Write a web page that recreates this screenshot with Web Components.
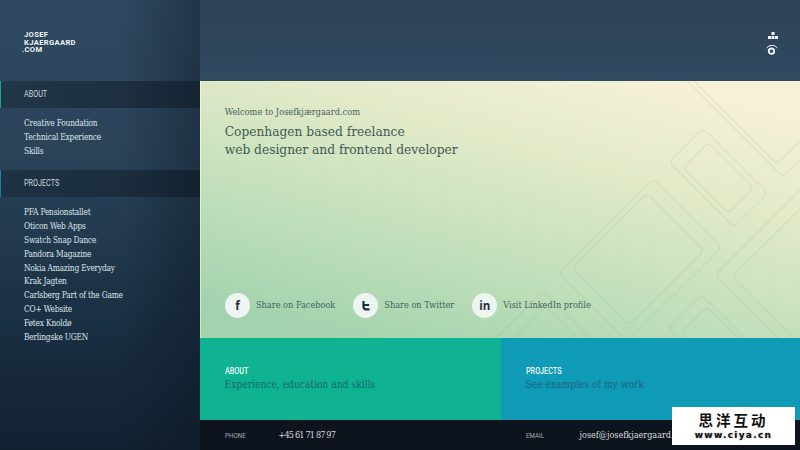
<!DOCTYPE html>
<html>
<head>
<meta charset="utf-8">
<style>
  html, body { margin: 0; height: 100%; overflow: hidden; background: #0e141e; }
  body { font-family: "DejaVu Serif", "Liberation Serif", serif; font-stretch: condensed; }
</style>
</head>
<body>
<site-page>
  <site-sidebar slot="side">
    <nav-group title="ABOUT" accent="#1aa58f" style="--top:9px;--bottom:11.6px">
      <a>Creative Foundation</a><a>Technical Experience</a><a>Skills</a>
    </nav-group>
    <nav-group title="PROJECTS" accent="#17839c" style="--top:9.5px;--bottom:11px">
      <a>PFA Pensionstallet</a><a>Oticon Web Apps</a><a>Swatch Snap Dance</a><a>Pandora Magazine</a>
      <a>Nokia Amazing Everyday</a><a>Krak Jagten</a><a>Carlsberg Part of the Game</a><a>CO+ Website</a>
      <a>Føtex Knoldø</a><a>Berlingske UGEN</a>
    </nav-group>
  </site-sidebar>
  <top-bar slot="main"></top-bar>
  <hero-panel slot="main">
    <share-link icon="f" label="Share on Facebook"></share-link>
    <share-link icon="t" label="Share on Twitter"></share-link>
    <share-link icon="in" label="Visit LinkedIn profile"></share-link>
  </hero-panel>
  <div slot="main" style="display:flex">
    <promo-card heading="ABOUT" text="Experience, education and skills" style="width:301px;--bg:#10b391;--fg:#12696f"></promo-card>
    <promo-card heading="PROJECTS" text="See examples of my work" style="flex:1;--bg:#0f9ab5;--fg:#1e6482"></promo-card>
  </div>
  <div slot="main" style="display:flex">
    <contact-item label="PHONE" value="+45 61 71 87 97" style="width:301px;--vs:-.8px"></contact-item>
    <contact-item label="EMAIL" value="josef@josefkjaergaard.com" style="flex:1"></contact-item>
  </div>
  <water-mark slot="over"></water-mark>
</site-page>

<script>
class SitePage extends HTMLElement {
  constructor() {
    super();
    this.attachShadow({ mode: 'open' });
    this.shadowRoot.innerHTML = `
      <style>
        :host { display: grid; grid-template-columns: 200px 600px; width: 800px; height: 450px; position: relative; overflow: hidden; }
        .main { display: flex; flex-direction: column; min-width: 0; }
      </style>
      <slot name="side"></slot>
      <div class="main"><slot name="main"></slot></div>
      <slot name="over"></slot>
    `;
  }
}

class SiteSidebar extends HTMLElement {
  constructor() {
    super();
    this.attachShadow({ mode: 'open' });
    this.shadowRoot.innerHTML = `
      <style>
        :host {
          display: block; height: 450px;
          background:
            linear-gradient(to right, rgba(10,20,30,0) 60%, rgba(10,20,30,.38) 100%),
            linear-gradient(to bottom, #2f4961 0%, #2a4359 35%, #1a3044 70%, #122130 100%);
        }
        .logo {
          height: 81px; box-sizing: border-box; padding: 31px 0 0 24px;
          font: 700 7.6px/8px "Roboto", "Liberation Sans", sans-serif;
          letter-spacing: .35px; color: #f2f5f6;
        }
        .logo div { height: 7.6px; }
        .dot { margin-left: -2px; }
      </style>
      <div class="logo"><div>JOSEF</div><div>KJAERGAARD</div><div class="dot">.COM</div></div>
      <slot></slot>
    `;
  }
}

class NavGroup extends HTMLElement {
  constructor() {
    super();
    this.attachShadow({ mode: 'open' });
    this.shadowRoot.innerHTML = `
      <style>
        :host { display: block; }
        .bar {
          height: 27px; box-sizing: border-box; padding: 0 0 1px 24px;
          display: flex; align-items: center; position: relative;
          background: linear-gradient(to right, rgba(15,28,40,.38), rgba(10,20,30,.5));
          font: 400 8.8px "Roboto", "Liberation Sans", sans-serif; color: #cdd6dc;
        }
        .bar span { transform: scaleX(.82); transform-origin: left center; }
        .bar i { position: absolute; left: 0; top: 0; bottom: 0; width: 1px; }
        .list { padding: var(--top) 0 var(--bottom) 24px; }
        ::slotted(a) {
          display: block; height: 13.8px; line-height: 13.8px; white-space: nowrap;
          font-size: 8.3px; letter-spacing: -.2px; color: #dfe5e9;
        }
      </style>
      <div class="bar"><i></i><span></span></div>
      <div class="list"><slot></slot></div>
    `;
    this.shadowRoot.querySelector('span').textContent = this.getAttribute('title');
    this.shadowRoot.querySelector('i').style.background = this.getAttribute('accent');
    this.removeAttribute('title');
  }
}

class TopBar extends HTMLElement {
  constructor() {
    super();
    this.attachShadow({ mode: 'open' });
    this.shadowRoot.innerHTML = `
      <style>
        :host {
          display: flex; flex-direction: column; align-items: flex-end; height: 81px; box-sizing: border-box;
          padding: 32px 21px 0 0; gap: 6px;
          background: linear-gradient(to bottom, #2d4257, #304a61);
        }
        svg { display: block; }
      </style>
      <svg width="11" height="7" viewBox="0 0 11 7" fill="#f0f4f5">
        <rect x="3.5" y="0" width="3" height="3"/>
        <rect x="0" y="4" width="3" height="3"/><rect x="3.5" y="4" width="3" height="3"/><rect x="7" y="4" width="3" height="3"/>
      </svg>
      <svg width="13" height="10" viewBox="0 0 13 10">
        <path d="M.5 3 A7 7 0 0 1 11.5 3" fill="none" stroke="#f0f4f5" stroke-width="1"/>
        <circle cx="5.5" cy="6.2" r="2.7" fill="none" stroke="#f0f4f5" stroke-width="1.8"/>
      </svg>
    `;
  }
}

// outlines behind the hero text: left corner x,y then side lengths along the two diagonals
const DIAMONDS = [
  [358, 192, 133, 97], [371, 187, 106, 81],
  [468, 81, 48, 92], [482, 87, 36, 64],
  [482, -4, 100, 141], [489, -4, 90, 123],
  [514, 194, 150, 150], [531, 196, 120, 120],
  [467, 247, 47, 90], [480, 252, 37, 70],
  [282, 270, 85, 70], [295, 275, 70, 50]
];

class HeroPanel extends HTMLElement {
  constructor() {
    super();
    this.attachShadow({ mode: 'open' });
    const shapes = DIAMONDS.map(([x, y, w, h]) =>
      `<rect transform="translate(${x} ${y}) rotate(-45)" width="${w}" height="${h}" rx="5"/>`).join('');
    this.shadowRoot.innerHTML = `
      <style>
        :host {
          display: flex; flex-direction: column; height: 257px; box-sizing: border-box; position: relative;
          padding: 24px 24px 20px 24.7px; overflow: hidden; border-left: 1px solid rgba(255,255,255,.2);
          background: linear-gradient(15deg, #a3d2ae 8%, #bcdeb8 32%, #e2eac8 66%, #f7f1d8 92%);
          color: #47625d;
        }
        svg { position: absolute; left: 0; top: 0; }
        .intro { position: relative; flex: 1; margin-left: -1px; }
        .welcome { font-size: 9.2px; line-height: 13px; color: #47615b; }
        h1 { margin: 4px 0 0; font-weight: 400; font-size: 13.6px; line-height: 18px; color: #3f5a55; }
        .links { position: relative; display: flex; gap: 18px; margin-left: -.7px; }
      </style>
      <svg width="600" height="257" fill="none" stroke="#7f9c7c" stroke-opacity=".17">${shapes}</svg>
      <div class="intro">
        <div class="welcome">Welcome to Josefkjærgaard.com</div>
        <h1>Copenhagen based freelance<br>web designer and frontend developer</h1>
      </div>
      <div class="links"><slot></slot></div>
    `;
  }
}

class ShareLink extends HTMLElement {
  constructor() {
    super();
    this.attachShadow({ mode: 'open' });
    const icon = this.getAttribute('icon');
    const glyph = icon === 't'
      ? `<svg width="10" height="11" viewBox="0 0 10 11" fill="none" stroke="#1c2f3f" stroke-width="2.2"><path d="M2.5 1v6a2.3 2.3 0 0 0 2.3 2.3h3.7M2.5 5h5.6"/></svg>`
      : `<b>${icon}</b>`;
    this.shadowRoot.innerHTML = `
      <style>
        :host { display: flex; align-items: center; gap: 6px; font-size: 9.1px; color: #46635c; white-space: nowrap; }
        .round {
          width: 25px; height: 25px; border-radius: 50%; background: #eff6f1;
          display: flex; align-items: center; justify-content: center;
        }
        b { font: 700 11.5px "Open Sans", "Liberation Sans", sans-serif; color: #1c2f3f; }
        .label { margin-top: -2px; }
      </style>
      <span class="round">${glyph}</span>
      <span class="label">${this.getAttribute('label')}</span>
    `;
  }
}

class PromoCard extends HTMLElement {
  constructor() {
    super();
    this.attachShadow({ mode: 'open' });
    this.shadowRoot.innerHTML = `
      <style>
        :host { display: block; height: 82px; box-sizing: border-box; padding: 27px 0 0 24.5px; background: var(--bg); }
        .h { font: 500 8.8px/12px "Roboto", "Liberation Sans", sans-serif; color: #f2fbf9; transform: scaleX(.82); transform-origin: left center; }
        .t { font-size: 10.2px; line-height: 16px; color: var(--fg); white-space: nowrap; }
      </style>
      <div class="h">${this.getAttribute('heading')}</div>
      <div class="t">${this.getAttribute('text')}</div>
    `;
  }
}

class ContactItem extends HTMLElement {
  constructor() {
    super();
    this.attachShadow({ mode: 'open' });
    this.shadowRoot.innerHTML = `
      <style>
        :host { display: flex; align-items: center; height: 30px; box-sizing: border-box; padding-left: 24.5px; background: #0e141e; white-space: nowrap; }
        .l { width: 54px; font: 400 7.8px "Roboto", "Liberation Sans", sans-serif; color: #a3a9af; transform: scaleX(.8); transform-origin: left center; }
        .v { font-size: 9px; letter-spacing: var(--vs, 0); color: #d6dadc; }
      </style>
      <span class="l">${this.getAttribute('label')}</span>
      <span class="v">${this.getAttribute('value')}</span>
    `;
  }
}

class WaterMark extends HTMLElement {
  constructor() {
    super();
    this.attachShadow({ mode: 'open' });
    this.shadowRoot.innerHTML = `
      <style>
        :host {
          position: absolute; left: 672px; top: 407px; width: 123px; height: 38px; background: #fff;
          display: flex; flex-direction: column; align-items: center; color: #111;
        }
        .cn { font: 700 14.5px/20px "Noto Sans CJK SC", sans-serif; letter-spacing: 3px; margin-top: 3px; }
        .url { font: 700 9px/11px "DejaVu Sans", sans-serif; letter-spacing: 1.3px; text-shadow: 0 0 1.5px #777; }
      </style>
      <div class="cn">思洋互动</div>
      <div class="url">www.ciya.cn</div>
    `;
  }
}

customElements.define('site-page', SitePage);
customElements.define('site-sidebar', SiteSidebar);
customElements.define('nav-group', NavGroup);
customElements.define('top-bar', TopBar);
customElements.define('hero-panel', HeroPanel);
customElements.define('share-link', ShareLink);
customElements.define('promo-card', PromoCard);
customElements.define('contact-item', ContactItem);
customElements.define('water-mark', WaterMark);
</script>
</body>
</html>
